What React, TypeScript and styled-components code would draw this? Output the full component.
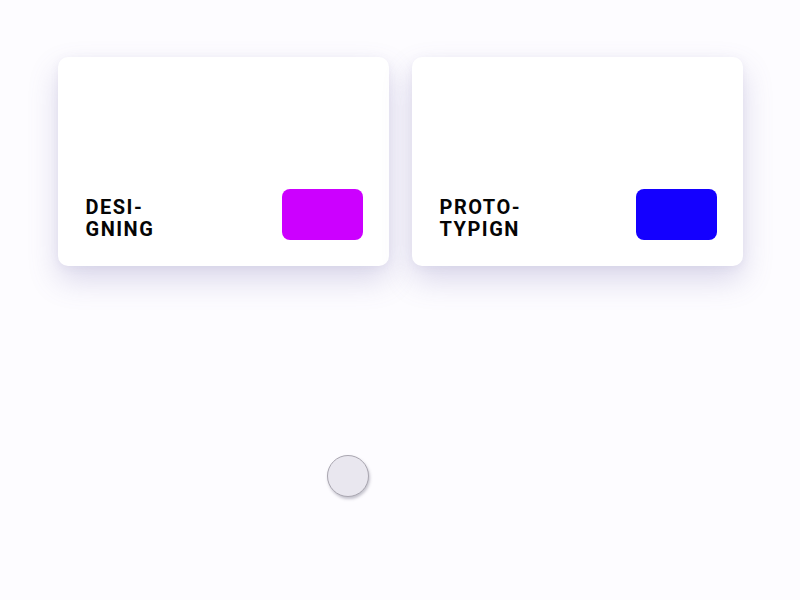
import React from "react";
import styled, { createGlobalStyle } from "styled-components";

const Global = createGlobalStyle`
  html, body { margin: 0; padding: 0; background: #fdfcff; }
  body { font-family: Roboto, "Liberation Sans", sans-serif; }
`;

const Page = styled.div`
  width: 800px;
  height: 600px;
  box-sizing: border-box;
  padding-top: 57px;
  overflow: hidden;
`;

const Cards = styled.div`
  display: flex;
  justify-content: center;
  gap: 23px;
`;

const Card = styled.div`
  width: 331px;
  height: 209px;
  box-sizing: border-box;
  padding: 0 26px 26px 28px;
  background: #ffffff;
  border-radius: 10px;
  box-shadow: 0 14px 30px rgba(110, 100, 170, 0.24), 0 2px 8px rgba(110, 100, 170, 0.08);
  display: flex;
  align-items: flex-end;
  justify-content: space-between;
`;

const Title = styled.div`
  font-family: Roboto, "Liberation Sans", sans-serif;
  font-weight: 700;
  font-size: 20px;
  line-height: 22px;
  letter-spacing: 1.5px;
  color: #050505;
  text-transform: uppercase;
`;

const Swatch = styled.div<{ $color: string }>`
  width: 81px;
  height: 51px;
  border-radius: 8px;
  background: ${(p) => p.$color};
`;

const Dot = styled.div`
  margin: 189px 0 0 327px;
  width: 40px;
  height: 40px;
  border-radius: 50%;
  background: #e9e7ef;
  border: 1px solid #a9a6b0;
  box-shadow: 1px 2px 3px rgba(90, 85, 110, 0.35);
`;

const items = [
  { a: "Desi-", b: "gning", color: "#cc00ff" },
  { a: "Proto-", b: "typign", color: "#1400ff" },
];

export default function App() {
  return (
    <Page>
      <Global />
      <Cards>
        {items.map((it) => (
          <Card key={it.a}>
            <Title>
              {it.a}
              <br />
              {it.b}
            </Title>
            <Swatch $color={it.color} />
          </Card>
        ))}
      </Cards>
      <Dot />
    </Page>
  );
}
